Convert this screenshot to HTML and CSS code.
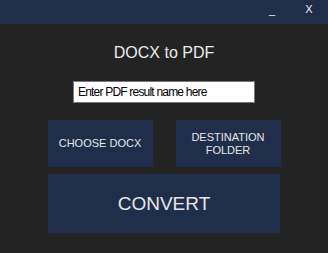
FILE: index.html
```html
<!DOCTYPE html>
<html lang="en-US">
	<head>
		<title>DOCX to PDF</title>
		<link rel="stylesheet" href="styles.css">
	</head>
	<body>
		<div class="title-bar">
			<button class="win-btn minimize">_</button>
			<button class="win-btn close">X</button>
		</div>
		<div class="main">
			<h1>DOCX to PDF</h1>
			<input class="name-input" type="text" value="Enter PDF result name here">
			<div class="button-row">
				<button class="action">CHOOSE DOCX</button>
				<button class="action">DESTINATION<br>FOLDER</button>
			</div>
			<button class="convert">CONVERT</button>
		</div>
	</body>
</html>
```

FILE: styles.css
```css
* {
	font-family: "Liberation Sans", Arial, sans-serif;
	box-sizing: border-box;
}
html, body {
	margin: 0;
	height: 100%;
}
body {
	background: #232323;
	color: #e6e6e6;
}

.title-bar {
	height: 24px;
	background: #1f2e4a;
	display: flex;
	flex-direction: row;
	justify-content: flex-end;
	align-items: center;
	padding-right: 15px;
}
.win-btn {
	background: transparent;
	border: 0;
	margin: 0;
	padding: 0;
	color: #f0f0f0;
	font-size: 11px;
	cursor: pointer;
}
.win-btn.minimize {
	width: 36px;
	text-align: left;
	padding-bottom: 4px;
}
.win-btn.close {
	width: 8px;
	text-align: center;
	padding-bottom: 6px;
}

.main {
	display: flex;
	flex-direction: column;
	align-items: center;
	padding-top: 19px;
}
.main h1 {
	margin: 0;
	height: 20px;
	line-height: 20px;
	font-size: 16px;
	font-weight: normal;
	color: #ececec;
}

.name-input {
	margin-top: 18px;
	width: 182px;
	height: 22px;
	padding: 0 4px;
	border: 1px solid #7a7a7a;
	background: white;
	color: black;
	font-size: 12px;
	letter-spacing: -0.8px;
	outline: none;
}

.button-row {
	margin-top: 17px;
	display: flex;
	flex-direction: row;
	gap: 23px;
}
.action, .convert {
	background: #1f2e4a;
	border: 0;
	margin: 0;
	color: #e6e6e6;
	cursor: pointer;
}
.action {
	width: 105px;
	height: 47px;
	font-size: 11px;
	line-height: 13px;
}
.convert {
	margin-top: 7px;
	width: 232px;
	height: 59px;
	font-size: 19px;
}
```
